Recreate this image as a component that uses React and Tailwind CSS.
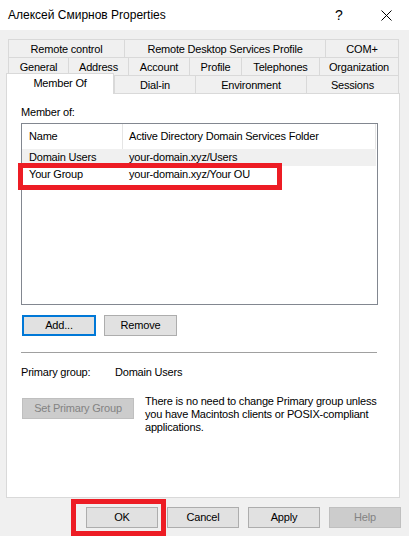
import React from "react";

const Tab = ({ w, children, last }) => (
  <div
    className={`h-[18px] pt-[1px] border-t border-l border-[#d9d9d9] bg-[#f0f0f0] flex items-center justify-center ${last ? "border-r" : ""}`}
    style={{ width: w }}
  >
    {children}
  </div>
);

const Btn = ({ w, children, disabled, focus }) => (
  <div
    className={`h-[21px] flex items-center justify-center ${
      disabled
        ? "bg-[#cccccc] border border-[#bfbfbf] text-[#838383]"
        : focus
        ? "bg-[#e1e1e1] border-2 border-[#0078d7] text-black"
        : "bg-[#e1e1e1] border border-[#adadad] text-black"
    }`}
    style={{ width: w }}
  >
    {children}
  </div>
);

export default function App() {
  return (
    <div
      className="relative w-[409px] h-[536px] bg-[#f0f0f0] flex flex-col text-[11px] leading-[13px] tracking-[-0.2px] text-black overflow-hidden"
      style={{ fontFamily: '"Liberation Sans", Arial, sans-serif' }}
    >
      {/* Title bar */}
      <div className="h-[30px] bg-white flex items-center shrink-0">
        <div className="pl-[8px] text-[12px] tracking-normal leading-[16px] flex-1">
          Алексей Смирнов Properties
        </div>
        <div className="w-[30px] text-[14px] tracking-normal flex justify-center mr-[17px]">?</div>
        <div className="w-[30px] flex justify-center mr-[8px]">
          <svg width="11" height="11" viewBox="0 0 11 11">
            <path d="M0.5 0.5 L10.5 10.5 M10.5 0.5 L0.5 10.5" stroke="#000" strokeWidth="1" />
          </svg>
        </div>
      </div>

      {/* Tabs */}
      <div className="mt-[9px] flex flex-col">
        <div className="flex ml-[8px]">
          <Tab w={116}>Remote control</Tab>
          <Tab w={201}>Remote Desktop Services Profile</Tab>
          <Tab w={74} last>COM+</Tab>
        </div>
        <div className="flex ml-[8px]">
          <Tab w={60}>General</Tab>
          <Tab w={60}>Address</Tab>
          <Tab w={61}>Account</Tab>
          <Tab w={52}>Profile</Tab>
          <Tab w={78}>Telephones</Tab>
          <Tab w={80} last>Organization</Tab>
        </div>
        <div className="flex ml-[6px] h-[18px]">
          <div className="relative z-10 -mt-[2px] w-[108px] h-[21px] bg-white border-t border-l border-r border-[#d9d9d9] flex items-center justify-center pb-[2px]">
            Member Of
          </div>
          <Tab w={81}>Dial-in</Tab>
          <Tab w={111}>Environment</Tab>
          <Tab w={93} last>Sessions</Tab>
        </div>
      </div>

      {/* Panel */}
      <div className="ml-[6px] w-[394px] h-[405px] bg-white border border-[#d9d9d9] flex flex-col px-[14px] pt-[12px] shrink-0">
        <div>Member of:</div>
        <div className="mt-[4px] w-[357px] h-[182px] border border-[#828790] flex flex-col">
          <div className="flex h-[25px] w-[354px] border-r border-[#e5e5e5]">
            <div className="w-[101px] pl-[7px] border-r border-[#e5e5e5] flex items-center">Name</div>
            <div className="pl-[6px] flex items-center">Active Directory Domain Services Folder</div>
          </div>
          <div className="flex h-[17px] w-[354px] bg-[#f0f0f0] items-center">
            <div className="w-[101px] pl-[7px]">Domain Users</div>
            <div className="pl-[6px]">your-domain.xyz/Users</div>
          </div>
          <div className="flex h-[17px] w-[354px] items-center">
            <div className="w-[101px] pl-[7px]">Your Group</div>
            <div className="pl-[6px]">your-domain.xyz/Your OU</div>
          </div>
        </div>

        <div className="mt-[10px] flex ml-[1px] gap-[8px]">
          <Btn w={74} focus>Add...</Btn>
          <Btn w={73}>Remove</Btn>
        </div>

        <div className="mt-[16px] h-px w-[356px] bg-[#a0a0a0]" />

        <div className="mt-[13px] flex">
          <div className="w-[94px]">Primary group:</div>
          <div>Domain Users</div>
        </div>

        <div className="mt-[19px] flex items-start ml-[1px]">
          <Btn w={112} disabled>Set Primary Group</Btn>
          <div className="ml-[11px] -mt-[3px] whitespace-nowrap">
            There is no need to change Primary group unless
            <br />
            you have Macintosh clients or POSIX-compliant
            <br />
            applications.
          </div>
        </div>
      </div>

      {/* Bottom buttons */}
      <div className="mt-[9px] flex justify-end pr-[8px] gap-[9px]">
        <Btn w={72}>OK</Btn>
        <Btn w={72}>Cancel</Btn>
        <Btn w={72}>Apply</Btn>
        <Btn w={72} disabled>Help</Btn>
      </div>

      {/* Red highlight overlays */}
      <div className="absolute left-[18px] top-[163px] w-[264px] h-[27px] border-[5px] border-[#ed1c24] pointer-events-none" />
      <div className="absolute left-[71px] top-[499px] w-[95px] h-[37px] border-[5px] border-[#ed1c24] pointer-events-none" />
    </div>
  );
}
